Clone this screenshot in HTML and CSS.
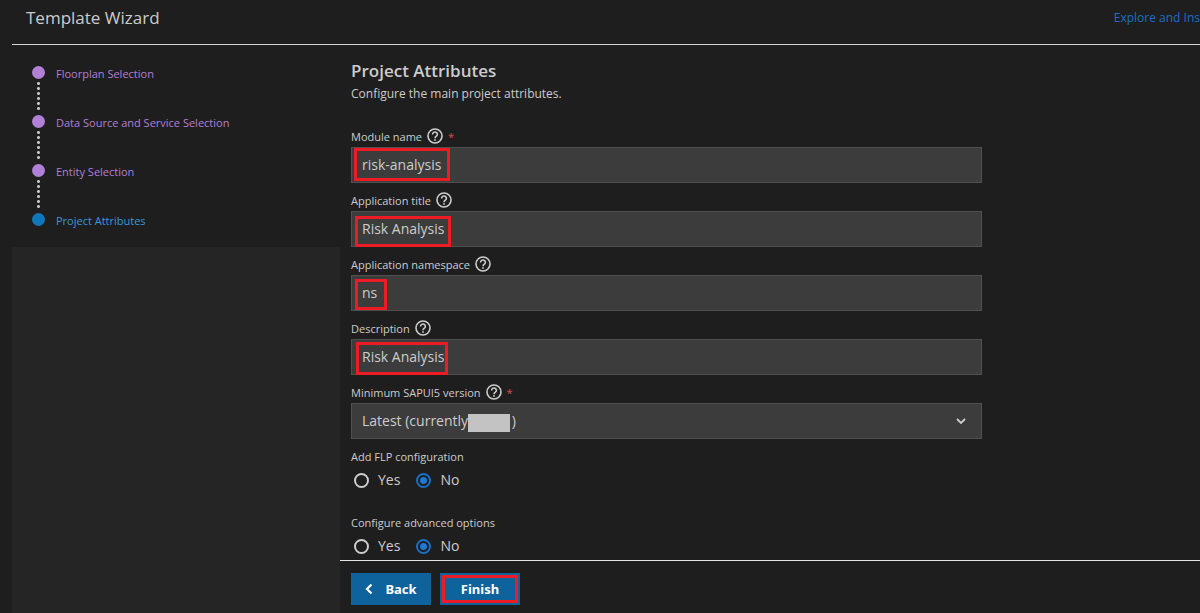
FILE: index.html
```html
<!DOCTYPE html>
<html lang="en">
<head>
<meta charset="utf-8">
<meta name="viewport" content="width=device-width, initial-scale=1">
<title>Template Wizard</title>
<link rel="stylesheet" href="styles.css">
</head>
<body>
<svg class="defs" aria-hidden="true">
  <symbol id="help" viewBox="0 0 16 16">
    <circle cx="8" cy="8" r="7" fill="none" stroke="currentColor" stroke-width="1.6"/>
    <path d="M5.600 6.500a2.400 2.300 0 1 1 3.800 1.700C8.500 8.800 8 9.200 8 10.200" fill="none" stroke="currentColor" stroke-width="1.6"/>
    <rect x="7.200" y="11.200" width="1.600" height="1.600" fill="currentColor"/>
  </symbol>
</svg>
<header class="topbar">
  <h1 class="topbar-title">Template Wizard</h1>
  <a class="topbar-link" href="#">Explore and Ins</a>
</header>
<div class="wizard">
  <nav class="sidebar" aria-label="Steps">
    <ol class="steps">
      <li class="step"><span class="dot"></span><a class="step-link" href="#">Floorplan Selection</a></li>
      <li class="step"><span class="dot"></span><a class="step-link" href="#">Data Source and Service Selection</a></li>
      <li class="step"><span class="dot"></span><a class="step-link" href="#">Entity Selection</a></li>
      <li class="step current"><span class="dot"></span><a class="step-link" href="#" aria-current="step">Project Attributes</a></li>
    </ol>
  </nav>
  <main class="main">
    <form class="form" id="attributes">
      <h2 class="heading">Project Attributes</h2>
      <p class="subtitle">Configure the main project attributes.</p>
      <div class="field">
        <div class="label-row"><label for="module">Module name</label><svg class="help"><use href="#help"/></svg><span class="required">*</span></div>
        <div class="control"><input class="input" id="module" type="text" value="risk-analysis"><span class="mark mark-module"></span></div>
      </div>
      <div class="field">
        <div class="label-row"><label for="title">Application title</label><svg class="help"><use href="#help"/></svg></div>
        <div class="control"><input class="input" id="title" type="text" value="Risk Analysis"><span class="mark mark-title"></span></div>
      </div>
      <div class="field">
        <div class="label-row"><label for="namespace">Application namespace</label><svg class="help"><use href="#help"/></svg></div>
        <div class="control"><input class="input" id="namespace" type="text" value="ns"><span class="mark mark-namespace"></span></div>
      </div>
      <div class="field">
        <div class="label-row"><label for="description">Description</label><svg class="help"><use href="#help"/></svg></div>
        <div class="control"><input class="input" id="description" type="text" value="Risk Analysis"><span class="mark mark-description"></span></div>
      </div>
      <div class="field">
        <div class="label-row"><label for="version">Minimum SAPUI5 version</label><svg class="help"><use href="#help"/></svg><span class="required">*</span></div>
        <div class="control">
          <select class="input" id="version"><option>Latest (currently &nbsp;&nbsp;&nbsp;&nbsp;&nbsp;&nbsp;&nbsp;&nbsp;&nbsp;&nbsp;&nbsp;)</option></select>
          <span class="redacted"></span>
          <svg class="chevron" viewBox="0 0 10 6" aria-hidden="true"><path d="M1 1l4 4 4-4" fill="none" stroke="currentColor" stroke-width="1.800"/></svg>
        </div>
      </div>
      <fieldset class="group">
        <legend class="legend">Add FLP configuration</legend>
        <div class="options">
          <label class="option"><input class="radio" type="radio" name="flp">Yes</label>
          <label class="option"><input class="radio" type="radio" name="flp" checked>No</label>
        </div>
      </fieldset>
      <fieldset class="group">
        <legend class="legend">Configure advanced options</legend>
        <div class="options">
          <label class="option"><input class="radio" type="radio" name="advanced">Yes</label>
          <label class="option"><input class="radio" type="radio" name="advanced" checked>No</label>
        </div>
      </fieldset>
    </form>
    <footer class="footer">
      <button class="button" type="button"><svg class="back-icon" viewBox="0 0 8 12" aria-hidden="true"><path d="M6.500 1.500L2 6l4.500 4.500" fill="none" stroke="currentColor" stroke-width="2.200"/></svg>Back</button>
      <button class="button" type="submit" form="attributes">Finish<span class="mark mark-finish"></span></button>
    </footer>
  </main>
</div>
</body>
</html>
```
FILE: styles.css
```css
* { box-sizing: border-box; }

body {
  display: flex;
  flex-direction: column;
  min-height: 100vh;
  margin: 0;
  background: #1e1e1e;
  color: #cccccc;
  font: 12px/16px "Open Sans", "Noto Sans", sans-serif;
}

.defs { display: none; }

.topbar {
  display: flex;
  justify-content: space-between;
  height: 45px;
  margin-left: 12px;
  padding: 6px 0 0 14px;
  border-bottom: 1px solid #d4d4d4;
}

.topbar-title { margin: 0; font-size: 17px; line-height: 24px; font-weight: 400; }

.topbar-link {
  color: #1a6fc4;
  line-height: 23px;
  text-decoration: none;
  white-space: nowrap;
}

.wizard { display: flex; flex: 1; }

.sidebar { flex: 0 0 328px; margin-left: 12px; background: #252526; }

.steps {
  margin: 0;
  padding: 21px 0 12px;
  list-style: none;
  background: #1e1e1e;
  font-size: 11px;
}

.step { display: flex; gap: 11px; height: 49px; padding-left: 20px; }
.step.current { height: 22px; }

.dot { flex: 0 0 13px; }

.dot::before {
  content: "";
  display: block;
  height: 13px;
  border-radius: 50%;
  background: #b180d7;
}

/* Dotted connector to the next step */
.dot::after {
  content: "";
  display: block;
  width: 3px;
  height: 30px;
  margin: 2px 0 0 5px;
  background: radial-gradient(circle, #c4c4c4 1px, transparent 2px) 0 0 / 3px 5px;
}

.step.current .dot::before { background: #1177bb; }
.step.current .dot::after { display: none; }

.step-link { color: #b180d7; text-decoration: none; }
.step.current .step-link { color: #3a96dd; }

.main { display: flex; flex: 1; flex-direction: column; min-width: 0; }

.form { flex: 1; padding: 14px 11px 4px; }

.heading { margin: 0; font-size: 17px; line-height: 24px; font-weight: 600; }
.subtitle { margin: 3px 0 26px; }

.field { max-width: 631px; margin-bottom: 9px; }

.label-row { display: flex; gap: 5px; height: 19px; font-size: 11px; line-height: 17px; }
.help { width: 16px; height: 16px; }
.required { color: #e04848; }

.control { position: relative; }

.input {
  display: block;
  width: 100%;
  height: 36px;
  padding: 0 10px 1px;
  border: 1px solid #505050;
  border-radius: 0;
  background: #3c3c3c;
  color: #cccccc;
  font: 14px/20px "Open Sans", "Noto Sans", sans-serif;
  appearance: none;
}

.redacted {
  position: absolute;
  top: 11px;
  left: 117px;
  width: 42px;
  height: 18px;
  background: #c3c3c3;
  pointer-events: none;
}

.chevron { position: absolute; top: 15px; right: 16px; width: 10px; height: 6px; }

/* Highlight frames */
.mark { position: absolute; border: 3px solid #ed1c24; pointer-events: none; }
.mark-module { top: 1px; left: 3px; width: 96px; height: 33px; }
.mark-title { top: 5px; left: 4px; width: 96px; height: 31px; }
.mark-namespace { top: 4px; left: 4px; width: 32px; height: 31px; }
.mark-description { top: 3px; left: 5px; width: 92px; height: 33px; }
.mark-finish { inset: 2px; }

.group { margin: 0 0 24px; padding: 0; border: 0; }
.group:last-child { margin-bottom: 0; }
.legend { padding: 0; font-size: 11px; line-height: 17px; }

.options { display: flex; gap: 16px; padding: 5px 0 0 3px; }
.option { display: flex; align-items: center; gap: 9px; font-size: 14px; line-height: 20px; }

.radio {
  width: 15px;
  height: 15px;
  margin: 0;
  border: 2px solid #cccccc;
  border-radius: 50%;
  appearance: none;
}

.radio:checked {
  border-color: #1a6fc4;
  background: radial-gradient(circle, #1a7ad9 3px, transparent 4px);
}

.footer {
  display: flex;
  gap: 9px;
  padding: 12px 11px 8px;
  border-top: 1px solid #e4e4e4;
}

.button {
  position: relative;
  display: flex;
  align-items: center;
  justify-content: center;
  gap: 12px;
  width: 80px;
  height: 32px;
  padding: 0;
  border: 0;
  background: #0e639c;
  color: #ffffff;
  font: 700 13px/20px "Noto Sans", "Open Sans", sans-serif;
}

.back-icon { width: 8px; height: 12px; }
```
